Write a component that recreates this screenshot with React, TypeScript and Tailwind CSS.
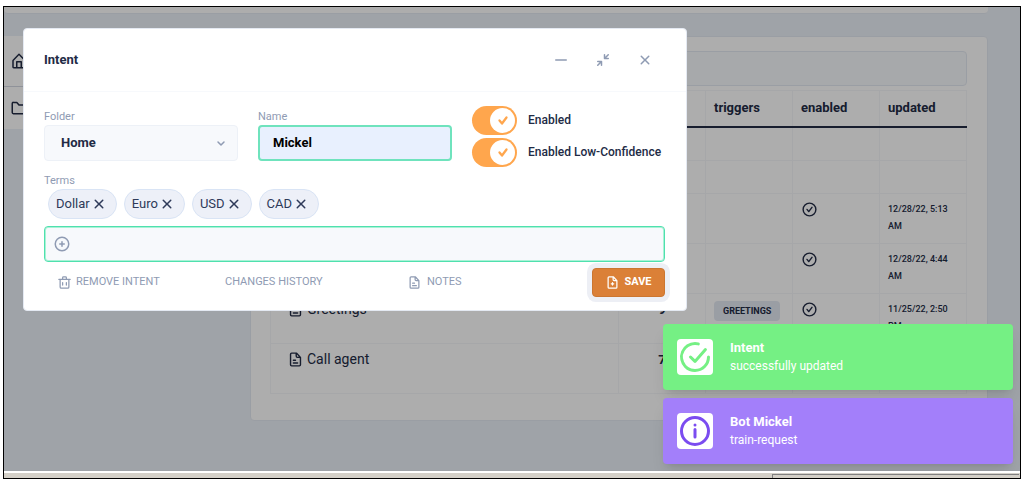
import { useState } from "react";

const icons = {
  home: "M20.42 10.18L12.71 2.3a1 1 0 0 0-1.42 0l-7.71 7.89A2 2 0 0 0 3 11.62V20a2 2 0 0 0 1.89 2h14.22A2 2 0 0 0 21 20v-8.38a2.07 2.07 0 0 0-.58-1.44zM10 20v-6h4v6zm9 0h-3v-7a1 1 0 0 0-1-1H9a1 1 0 0 0-1 1v7H5v-8.42l7-7.15 7 7.19z",
  folder:
    "M19.5 20.5h-15A2.47 2.47 0 0 1 2 18.07V5.93A2.47 2.47 0 0 1 4.5 3.5h4.6a1 1 0 0 1 .77.37l2.6 3.18h7A2.47 2.47 0 0 1 22 9.48v8.59a2.47 2.47 0 0 1-2.5 2.43zM4 13.76v4.31a.46.46 0 0 0 .5.43h15a.46.46 0 0 0 .5-.43V9.48a.46.46 0 0 0-.5-.43H12a1 1 0 0 1-.77-.37L8.63 5.5H4.5a.46.46 0 0 0-.5.43z",
  fileText:
    "M15 16H9a1 1 0 0 0 0 2h6a1 1 0 0 0 0-2z M9 14h3a1 1 0 0 0 0-2H9a1 1 0 0 0 0 2z M19.74 8.33l-5.44-6a1 1 0 0 0-.74-.33h-7A2.53 2.53 0 0 0 4 4.5v15A2.53 2.53 0 0 0 6.56 22h10.88A2.53 2.53 0 0 0 20 19.5V9a1 1 0 0 0-.26-.67zM14 5l2.74 3h-2a.79.79 0 0 1-.74-.85zm3.44 15H6.56a.53.53 0 0 1-.56-.5v-15a.53.53 0 0 1 .56-.5H12v3.15A2.79 2.79 0 0 0 14.71 10H18v9.5a.53.53 0 0 1-.56.5z",
  fileAdd:
    "M19.74 8.33l-5.44-6a1 1 0 0 0-.74-.33h-7A2.53 2.53 0 0 0 4 4.5v15A2.53 2.53 0 0 0 6.56 22h10.88A2.53 2.53 0 0 0 20 19.5V9a1 1 0 0 0-.26-.67zM14 5l2.74 3h-2a.79.79 0 0 1-.74-.85zm3.44 15H6.56a.53.53 0 0 1-.56-.5v-15a.53.53 0 0 1 .56-.5H12v3.15A2.79 2.79 0 0 0 14.71 10H18v9.5a.53.53 0 0 1-.56.5z M14 13h-1v-1a1 1 0 0 0-2 0v1h-1a1 1 0 0 0 0 2h1v1a1 1 0 0 0 2 0v-1h1a1 1 0 0 0 0-2z",
  checkCircle:
    "M12 2a10 10 0 1 0 10 10A10 10 0 0 0 12 2zm0 18a8 8 0 1 1 8-8 8 8 0 0 1-8 8z M14.7 8.39l-3.78 5-1.63-2.11a1 1 0 0 0-1.58 1.23l2.43 3.11a1 1 0 0 0 .79.38 1 1 0 0 0 .79-.39l4.57-6a1 1 0 1 0-1.6-1.22z",
  checkOpen:
    "M9.71 11.29a1 1 0 0 0-1.42 1.42l3 3A1 1 0 0 0 12 16a1 1 0 0 0 .72-.34l7-8a1 1 0 0 0-1.5-1.32L12 13.54z M21 11a1 1 0 0 0-1 1 8 8 0 0 1-8 8A8 8 0 0 1 6.33 6.36 7.93 7.93 0 0 1 12 4a8.79 8.79 0 0 1 1.9.22 1 1 0 1 0 .47-1.94A10.54 10.54 0 0 0 12 2a10 10 0 0 0-7 17.09A9.93 9.93 0 0 0 12 22a10 10 0 0 0 10-10 1 1 0 0 0-1-1z",
  info: "M12 2a10 10 0 1 0 10 10A10 10 0 0 0 12 2zm0 18a8 8 0 1 1 8-8 8 8 0 0 1-8 8z M13 8a1 1 0 1 1-2 0 1 1 0 0 1 2 0z M12 10a1 1 0 0 0-1 1v5a1 1 0 0 0 2 0v-5a1 1 0 0 0-1-1z",
  plusCircle:
    "M12 2a10 10 0 1 0 10 10A10 10 0 0 0 12 2zm0 18a8 8 0 1 1 8-8 8 8 0 0 1-8 8z M15 11h-2V9a1 1 0 0 0-2 0v2H9a1 1 0 0 0 0 2h2v2a1 1 0 0 0 2 0v-2h2a1 1 0 0 0 0-2z",
  trash:
    "M21 6h-5V4.33A2.42 2.42 0 0 0 13.5 2h-3A2.42 2.42 0 0 0 8 4.33V6H3a1 1 0 0 0 0 2h1v11a3 3 0 0 0 3 3h10a3 3 0 0 0 3-3V8h1a1 1 0 0 0 0-2zM10 4.33c0-.16.21-.33.5-.33h3c.29 0 .5.17.5.33V6h-4zM18 19a1 1 0 0 1-1 1H7a1 1 0 0 1-1-1V8h12z M9 17a1 1 0 0 0 1-1v-4a1 1 0 0 0-2 0v4a1 1 0 0 0 1 1z M15 17a1 1 0 0 0 1-1v-4a1 1 0 0 0-2 0v4a1 1 0 0 0 1 1z",
  collapse:
    "M19 9h-2.58l3.29-3.29a1 1 0 1 0-1.42-1.42L15 7.57V5a1 1 0 0 0-1-1 1 1 0 0 0-1 1v5a1 1 0 0 0 1 1h5a1 1 0 0 0 0-2z M10 13H5a1 1 0 0 0 0 2h2.57l-3.28 3.29a1 1 0 0 0 0 1.42 1 1 0 0 0 1.42 0L9 16.42V19a1 1 0 0 0 1 1 1 1 0 0 0 1-1v-5a1 1 0 0 0-1-1z",
  close:
    "M13.41 12l4.3-4.29a1 1 0 1 0-1.42-1.42L12 10.59l-4.29-4.3a1 1 0 0 0-1.42 1.42l4.3 4.29-4.3 4.29a1 1 0 0 0 0 1.42 1 1 0 0 0 1.42 0l4.29-4.3 4.29 4.3a1 1 0 0 0 1.42 0 1 1 0 0 0 0-1.42z",
  minus: "M19 13H5a1 1 0 0 1 0-2h14a1 1 0 0 1 0 2z",
};

function Icon({ name, className }: { name: keyof typeof icons; className: string }) {
  return (
    <svg viewBox="0 0 24 24" fill="currentColor" className={`shrink-0 ${className}`} aria-hidden="true">
      <path fillRule="evenodd" d={icons[name]} />
    </svg>
  );
}

interface IntentRow {
  name?: string;
  count?: number;
  trigger?: string;
  enabled?: boolean;
  date?: string;
  period?: string;
}

const rows: IntentRow[] = [
  {},
  {},
  { enabled: true, date: "12/28/22, 5:13", period: "AM" },
  { enabled: true, date: "12/28/22, 4:44", period: "AM" },
  { name: "Greetings", count: 9, trigger: "GREETINGS", enabled: true, date: "11/25/22, 2:50", period: "PM" },
  { name: "Call agent", count: 7 },
];

const headCell = "border border-b-2 border-[#f5f7fa] border-b-[#222b45] px-2";
const cell = "border border-[#f5f7fa] px-2 pt-[7px] pb-2 align-top";

function IntentTable() {
  return (
    <table className="mt-1 w-full table-fixed border-collapse">
      <thead>
        <tr className="h-9 text-left text-[13px] leading-4 font-bold">
          <th aria-label="name" className={`w-1/2 ${headCell}`} />
          <th aria-label="terms" className={headCell} />
          <th className={headCell}>triggers</th>
          <th className={headCell}>enabled</th>
          <th className={headCell}>updated</th>
        </tr>
      </thead>
      <tbody>
        {rows.map((row, i) => (
          <tr key={i} className={i < 2 ? "h-8" : "h-[50px]"}>
            <td className={cell}>
              {row.name && (
                <span className="flex items-center gap-[3px] pl-2 text-sm leading-[17px]">
                  <Icon name="fileText" className="size-[17px]" />
                  {row.name}
                </span>
              )}
            </td>
            <td className={`${cell} text-center text-[13px] leading-[17px] font-bold`}>{row.count}</td>
            <td className={cell}>
              {row.trigger && (
                <span className="block w-fit rounded-sm bg-[#e4e9f2] px-[9px] text-[9px] leading-5 font-bold">
                  {row.trigger}
                </span>
              )}
            </td>
            <td className={cell}>{row.enabled && <Icon name="checkCircle" className="size-[17px]" />}</td>
            <td className={`${cell} text-[9px] leading-[17px] font-medium`}>
              {row.date}
              <br />
              {row.period}
            </td>
          </tr>
        ))}
      </tbody>
    </table>
  );
}

function Toggle({ id, label }: { id: string; label: string }) {
  const [on, setOn] = useState(true);

  return (
    <label htmlFor={id} className="flex h-8 items-center gap-[11px] text-xs font-medium">
      <span className="relative h-[29px] w-[45px] shrink-0">
        <input
          id={id}
          type="checkbox"
          checked={on}
          onChange={() => setOn(!on)}
          className="peer absolute inset-0 size-full appearance-none rounded-full bg-[#c5cee0] checked:bg-[#ffa64d]"
        />
        <span className="pointer-events-none absolute top-[2px] left-[2px] flex size-[25px] items-center justify-center rounded-full bg-white peer-checked:left-[18px]">
          <svg viewBox="0 0 12 12" className="size-3" fill="none" stroke="#ffa64d" strokeWidth="2.3" strokeLinecap="round" strokeLinejoin="round">
            <path d="M2.5 6.5l2.5 3 4.5-6" />
          </svg>
        </span>
      </span>
      {label}
    </label>
  );
}

function IntentDialog() {
  const [name, setName] = useState("Mickel");
  const [terms, setTerms] = useState(["Dollar", "Euro", "USD", "CAD"]);

  return (
    <section
      role="dialog"
      aria-label="Intent"
      className="absolute top-[21px] left-[19px] w-[664px] rounded-sm border border-[#e4e9f2] bg-white"
    >
      <header className="flex h-[63px] items-center border-b border-[#f7f9fc] px-5">
        <h2 className="flex-1 text-[13px] font-bold">Intent</h2>
        <div className="flex gap-6 pr-3 text-[#8f9bb3]">
          <button type="button" aria-label="Minimize">
            <Icon name="minus" className="size-[18px]" />
          </button>
          <button type="button" aria-label="Collapse">
            <Icon name="collapse" className="size-[18px]" />
          </button>
          <button type="button" aria-label="Close">
            <Icon name="close" className="size-[18px]" />
          </button>
        </div>
      </header>

      <div className="pt-3 pr-[21px] pl-5">
        <div className="flex gap-5">
          <div className="w-[194px] pt-[5px]">
            <label htmlFor="folder" className="block text-[11px] leading-4 text-[#8f9bb3]">
              Folder
            </label>
            <div className="relative">
              <select
                id="folder"
                className="block h-9 w-full appearance-none rounded-sm border border-[#edf1f7] bg-[#f7f9fc] px-4 text-[13px] font-bold"
              >
                <option>Home</option>
              </select>
              <svg viewBox="0 0 12 12" className="pointer-events-none absolute top-3 right-[11px] size-3" fill="none" stroke="#8f9bb3" strokeWidth="1.5" strokeLinecap="round" strokeLinejoin="round">
                <path d="M3 5l3 3 3-3" />
              </svg>
            </div>
          </div>
          <div className="w-[194px] pt-[5px]">
            <label htmlFor="name" className="block text-[11px] leading-4 text-[#8f9bb3]">
              Name
            </label>
            <input
              id="name"
              value={name}
              onChange={(e) => setName(e.target.value)}
              className="block h-9 w-full rounded-sm border-2 border-[#6fe3bd] bg-[#e8f0fe] px-[13px] pb-[2px] text-[13px] font-bold text-black"
            />
          </div>
          <div>
            <Toggle id="enabled" label="Enabled" />
            <Toggle id="low-confidence" label="Enabled Low-Confidence" />
          </div>
        </div>

        <label htmlFor="term" className="mt-[5px] block text-[11px] leading-4 text-[#8f9bb3]">
          Terms
        </label>
        <ul className="flex gap-[7px] pl-1">
          {terms.map((term) => (
            <li
              key={term}
              className="flex h-[30px] items-center rounded-full border border-[#d9e4f5] bg-[#edf0f8] pr-2 pl-[7px] text-[13px] text-[#2e3a59]"
            >
              {term}
              <button type="button" aria-label={`Remove ${term}`} onClick={() => setTerms(terms.filter((t) => t !== term))}>
                <Icon name="close" className="size-[18px]" />
              </button>
            </li>
          ))}
        </ul>
        <div className="mt-[7px] flex h-9 items-center rounded-sm border border-[#4fe0ae] bg-[#f7f9fc] pl-2 ring-1 ring-[#a9f2d6] ring-inset">
          <Icon name="plusCircle" className="size-[18px] text-[#8f9bb3]" />
          <input id="term" className="h-full flex-1 bg-transparent px-2 text-[13px] outline-none" />
        </div>

        <footer className="mt-[6px] flex items-center pb-[13px] pl-[13px] text-[11px] text-[#8f9bb3]">
          <button type="button" className="flex w-[168px] items-center gap-1">
            <Icon name="trash" className="size-[15px]" />
            REMOVE INTENT
          </button>
          <button type="button" className="w-[182px] text-left">
            CHANGES HISTORY
          </button>
          <button type="button" className="flex items-center gap-[5px]">
            <Icon name="fileText" className="size-[15px]" />
            NOTES
          </button>
          <button
            type="button"
            className="ml-auto flex h-[29px] w-[73px] items-center justify-center gap-1 rounded-sm border border-[#cc7630] bg-[#db8037] font-bold text-white ring-5 ring-[#edeff5]"
          >
            <Icon name="fileAdd" className="size-[15px]" />
            SAVE
          </button>
        </footer>
      </div>
    </section>
  );
}

function Toast({ icon, title, text, className }: { icon: keyof typeof icons; title: string; text: string; className: string }) {
  return (
    <div role="status" className={`flex h-[66px] items-center gap-[17px] rounded-sm pl-[14px] shadow-lg ${className}`}>
      <span className="rounded-sm bg-white">
        <Icon name={icon} className="size-9" />
      </span>
      <div className="text-white">
        <p className="text-[13px] leading-[18px] font-bold">{title}</p>
        <p className="text-xs leading-[18px]">{text}</p>
      </div>
    </div>
  );
}

export default function App() {
  return (
    <div className="flex min-h-screen bg-white pt-[6px] pr-[6px] pb-1 pl-[3px] font-['Roboto','Liberation_Sans',sans-serif] text-[#222b45]">
      <div className="flex min-w-0 flex-1 flex-col border border-black">
        <main className="relative flex-1 overflow-hidden bg-[#ebf1f8] pr-8">
          <div className="h-[7px] rounded-b-sm border-b border-[#e4e9f2] bg-white" />
          <div className="mt-[22px] flex items-start justify-between">
            <nav className="w-56 bg-white">
              <a href="#home" aria-label="Home" className="flex h-[51px] items-center border-b border-[#d3d8e2] pl-[6px]">
                <Icon name="home" className="size-[18px]" />
              </a>
              <a href="#folder" aria-label="Folder" className="flex h-[42px] items-center pl-[6px]">
                <Icon name="folder" className="size-[18px]" />
              </a>
            </nav>
            <div className="ml-[22px] flex-1 rounded-sm border border-[#e4e9f2] bg-white pt-[14px] pr-5 pb-[26px] pl-[19px]">
              <input
                aria-label="Search"
                className="block h-[35px] w-full rounded-sm border border-[#e4e9f2] bg-[#f7f9fc] px-4"
              />
              <IntentTable />
            </div>
          </div>

          <div className="absolute inset-0 bg-black/32" />
          <IntentDialog />
          <div className="absolute right-[7px] bottom-[7px] flex w-[350px] flex-col gap-2">
            <Toast icon="checkOpen" title="Intent" text="successfully updated" className="bg-[#75f084] text-[#75f084]" />
            <Toast icon="info" title="Bot Mickel" text="train-request" className="bg-[#a37ffa] text-[#7b4cf0]" />
          </div>
        </main>
        <div className="flex h-[7px] items-end justify-end border-t-2 border-white bg-[#d4d0c8] pr-px">
          <div className="h-1 w-[247px] border-t border-l border-[#808080]" />
        </div>
      </div>
    </div>
  );
}
